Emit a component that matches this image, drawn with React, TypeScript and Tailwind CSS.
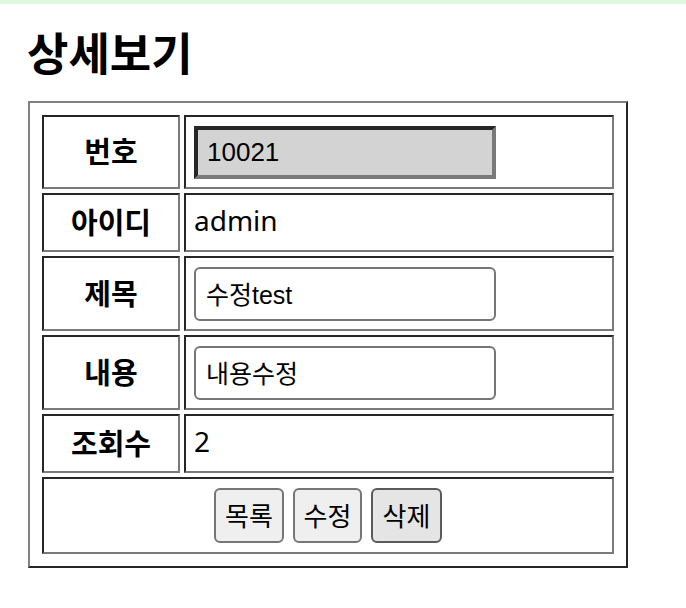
import React from "react";

const cellFont = { fontFamily: '"Noto Sans", "Noto Sans CJK KR", sans-serif' };

function Label({ children }: { children: React.ReactNode }) {
  return (
    <div className="w-[138px] shrink-0 border-2 border-t-[#262626] border-l-[#262626] border-b-[#7a7a7a] border-r-[#7a7a7a] flex items-center justify-center pb-[2px] text-[29px] font-bold text-black [font-family:'Noto_Sans_CJK_KR',sans-serif]">
      {children}
    </div>
  );
}

function Value({ children, text }: { children: React.ReactNode; text?: boolean }) {
  return (
    <div
      className={
        text
          ? "flex-1 border-2 border-t-[#262626] border-l-[#262626] border-b-[#7a7a7a] border-r-[#7a7a7a] flex items-center px-[8px] pb-[6px] text-[28px] text-black"
          : "flex-1 border-2 border-t-[#262626] border-l-[#262626] border-b-[#7a7a7a] border-r-[#7a7a7a] flex items-center px-[8px] text-[28px] text-black"
      }
      style={cellFont}
    >
      {children}
    </div>
  );
}

export default function App() {
  return (
    <div className="min-h-screen bg-white">
      <div className="h-[4px] bg-[#e0f8e0]" />
      <h2 className="ml-[27px] mt-[26px] text-[45px] leading-[44px] font-bold text-black [font-family:'Noto_Sans_CJK_KR',sans-serif]">
        상세보기
      </h2>
      <div className="ml-[28px] mt-[27px] w-[600px] border-2 border-t-[#808080] border-l-[#808080] border-b-[#262626] border-r-[#262626] p-[12px] flex flex-col gap-[4px]">
        <div className="flex gap-[4px] h-[74px]">
          <Label>번호</Label>
          <Value>
            <input
              readOnly
              value="10021"
              className="w-[302px] h-[53px] bg-[#d3d3d3] border-[4px] border-t-[#262626] border-l-[#262626] border-b-[#7a7a7a] border-r-[#7a7a7a] pl-[9px] text-[26px] text-black outline-none [font-family:'Liberation_Sans',sans-serif]"
            />
          </Value>
        </div>
        <div className="flex gap-[4px] h-[59px]">
          <Label>아이디</Label>
          <Value text>admin</Value>
        </div>
        <div className="flex gap-[4px] h-[75px]">
          <Label>제목</Label>
          <Value>
            <input
              readOnly
              value="수정test"
              className="w-[302px] h-[54px] bg-white border-2 border-[#767676] rounded-[6px] pl-[10px] pb-[2px] text-[25px] text-black outline-none [font-family:'Liberation_Sans','Noto_Sans_CJK_KR',sans-serif]"
            />
          </Value>
        </div>
        <div className="flex gap-[4px] h-[75px]">
          <Label>내용</Label>
          <Value>
            <input
              readOnly
              value="내용수정"
              className="w-[302px] h-[54px] bg-white border-2 border-[#767676] rounded-[6px] pl-[10px] pb-[2px] text-[25px] text-black outline-none [font-family:'Liberation_Sans','Noto_Sans_CJK_KR',sans-serif]"
            />
          </Value>
        </div>
        <div className="flex gap-[4px] h-[59px]">
          <Label>조회수</Label>
          <Value text>2</Value>
        </div>
        <div className="flex h-[77px] border-2 border-t-[#262626] border-l-[#262626] border-b-[#7a7a7a] border-r-[#7a7a7a] items-center justify-center gap-[9px]">
          <button className="w-[70px] h-[55px] pb-[3px] bg-[#efefef] border-2 border-[#767676] rounded-[6px] text-[26px] text-black [font-family:'Noto_Sans_CJK_KR',sans-serif]">
            목록
          </button>
          <button className="w-[69px] h-[55px] pb-[3px] bg-[#efefef] border-2 border-[#767676] rounded-[6px] text-[26px] text-black [font-family:'Noto_Sans_CJK_KR',sans-serif]">
            수정
          </button>
          <button className="w-[71px] h-[55px] pb-[3px] bg-[#e5e5e5] border-2 border-[#5a5a5a] rounded-[6px] text-[26px] text-black [font-family:'Noto_Sans_CJK_KR',sans-serif]">
            삭제
          </button>
        </div>
      </div>
    </div>
  );
}
